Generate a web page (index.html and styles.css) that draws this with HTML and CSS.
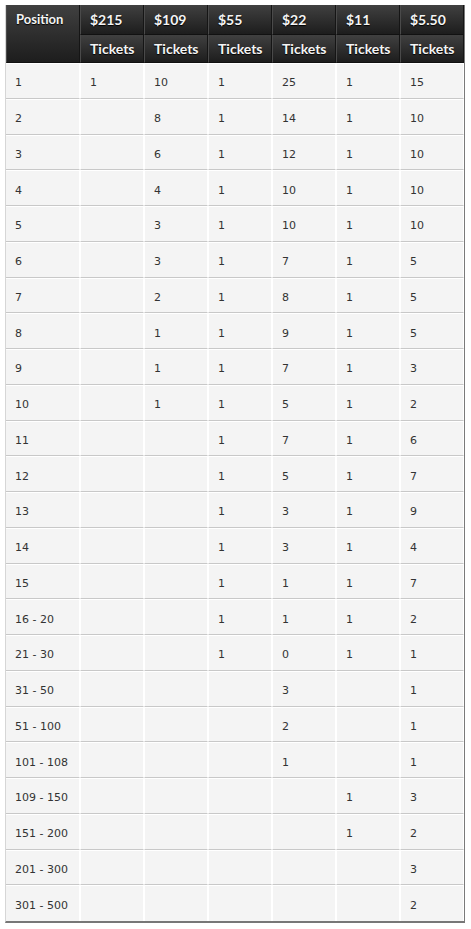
FILE: index.html
```html
<!DOCTYPE html>
<html>
<head>
<meta charset="utf-8">
<link rel="stylesheet" href="styles.css">
</head>
<body>
<table class="prizes">
  <colgroup>
    <col class="c-pos"><col class="c-val"><col class="c-val"><col class="c-val"><col class="c-val"><col class="c-val"><col class="c-val">
  </colgroup>
  <thead>
    <tr class="h1">
      <th rowspan="2" class="pos">Position</th>
      <th>$215</th><th>$109</th><th>$55</th><th>$22</th><th>$11</th><th>$5.50</th>
    </tr>
    <tr class="h2">
      <th>Tickets</th><th>Tickets</th><th>Tickets</th><th>Tickets</th><th>Tickets</th><th>Tickets</th>
    </tr>
  </thead>
  <tbody>
    <tr><td>1</td><td>1</td><td>10</td><td>1</td><td>25</td><td>1</td><td>15</td></tr>
    <tr><td>2</td><td></td><td>8</td><td>1</td><td>14</td><td>1</td><td>10</td></tr>
    <tr><td>3</td><td></td><td>6</td><td>1</td><td>12</td><td>1</td><td>10</td></tr>
    <tr><td>4</td><td></td><td>4</td><td>1</td><td>10</td><td>1</td><td>10</td></tr>
    <tr><td>5</td><td></td><td>3</td><td>1</td><td>10</td><td>1</td><td>10</td></tr>
    <tr><td>6</td><td></td><td>3</td><td>1</td><td>7</td><td>1</td><td>5</td></tr>
    <tr><td>7</td><td></td><td>2</td><td>1</td><td>8</td><td>1</td><td>5</td></tr>
    <tr><td>8</td><td></td><td>1</td><td>1</td><td>9</td><td>1</td><td>5</td></tr>
    <tr><td>9</td><td></td><td>1</td><td>1</td><td>7</td><td>1</td><td>3</td></tr>
    <tr><td>10</td><td></td><td>1</td><td>1</td><td>5</td><td>1</td><td>2</td></tr>
    <tr><td>11</td><td></td><td></td><td>1</td><td>7</td><td>1</td><td>6</td></tr>
    <tr><td>12</td><td></td><td></td><td>1</td><td>5</td><td>1</td><td>7</td></tr>
    <tr><td>13</td><td></td><td></td><td>1</td><td>3</td><td>1</td><td>9</td></tr>
    <tr><td>14</td><td></td><td></td><td>1</td><td>3</td><td>1</td><td>4</td></tr>
    <tr><td>15</td><td></td><td></td><td>1</td><td>1</td><td>1</td><td>7</td></tr>
    <tr><td>16 - 20</td><td></td><td></td><td>1</td><td>1</td><td>1</td><td>2</td></tr>
    <tr><td>21 - 30</td><td></td><td></td><td>1</td><td>0</td><td>1</td><td>1</td></tr>
    <tr><td>31 - 50</td><td></td><td></td><td></td><td>3</td><td></td><td>1</td></tr>
    <tr><td>51 - 100</td><td></td><td></td><td></td><td>2</td><td></td><td>1</td></tr>
    <tr><td>101 - 108</td><td></td><td></td><td></td><td>1</td><td></td><td>1</td></tr>
    <tr><td>109 - 150</td><td></td><td></td><td></td><td></td><td>1</td><td>3</td></tr>
    <tr><td>151 - 200</td><td></td><td></td><td></td><td></td><td>1</td><td>2</td></tr>
    <tr><td>201 - 300</td><td></td><td></td><td></td><td></td><td></td><td>3</td></tr>
    <tr><td>301 - 500</td><td></td><td></td><td></td><td></td><td></td><td>2</td></tr>
  </tbody>
</table>
</body>
</html>
```
FILE: styles.css
```css
html, body {
  margin: 0;
  padding: 0;
  background: #ffffff;
}
body {
  padding: 5px;
}
.prizes {
  width: 459px;
  table-layout: fixed;
  border-collapse: separate;
  border-spacing: 0;
  border-right: 1px solid #7a7a7a;
  border-bottom: 2px solid #777777;
  border-left: 1px solid #d6d6d6;
}
.c-pos { width: 74px; }
.c-val { width: 64px; }

.prizes th {
  box-sizing: border-box;
  background: linear-gradient(#404040, #1d1d1d);
  color: #f4f4f4;
  font-family: Lato, "Liberation Sans", sans-serif;
  font-weight: bold;
  font-size: 14px;
  text-align: left;
  padding: 0 0 0 9px;
  border-right: 1px solid #151515;
  border-left: 1px solid #4a4a4a;
  border-bottom: 1px solid #111111;
  text-shadow: 0 1px 1px #000000;
}
.prizes .h1 th {
  height: 30px;
  vertical-align: middle;
}
.prizes .h2 th {
  height: 28px;
  vertical-align: middle;
}
.prizes th.pos {
  vertical-align: top;
  padding-top: 6px;
  font-size: 13px;
}
.prizes td {
  box-sizing: border-box;
  background: #f4f4f4;
  color: #333333;
  font-family: "DejaVu Sans", Verdana, sans-serif;
  font-size: 11px;
  padding: 4px 0 0 9px;
  height: 35.75px;
  border-top: 1px solid #ffffff;
  border-bottom: 1px solid #c8c8c8;
  border-left: 1px solid #ffffff;
  border-right: 1px solid #ffffff;
  vertical-align: middle;
}
.prizes td:first-child {
  border-left: none;
}
.prizes tbody tr:last-child td {
  border-bottom: none;
}
```
